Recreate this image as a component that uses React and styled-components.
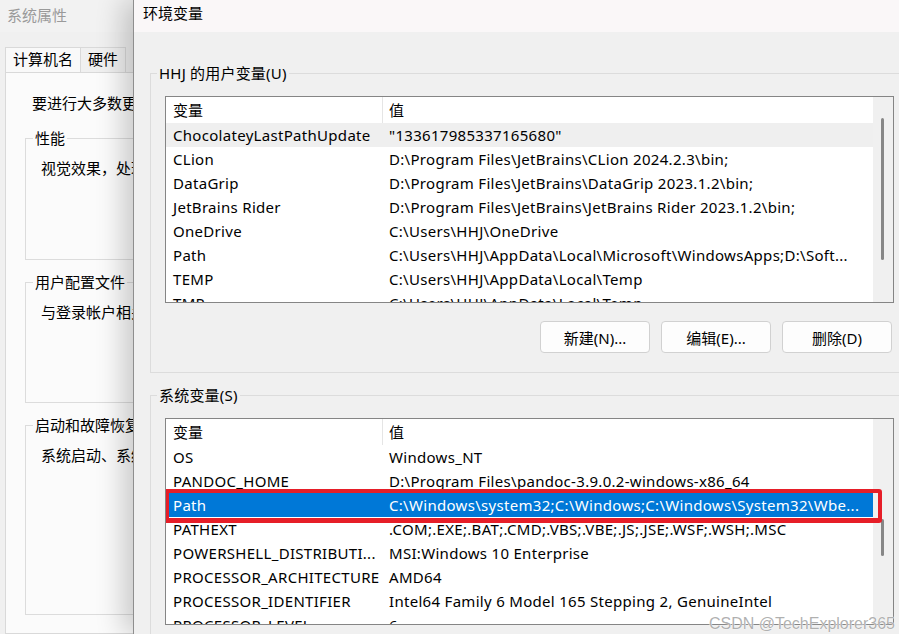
import React from 'react';
import styled, { createGlobalStyle } from 'styled-components';

const Global = createGlobalStyle`
  html, body {
    margin: 0;
    padding: 0;
    width: 899px;
    height: 634px;
    overflow: hidden;
    background: #f0f0f0;
  }
  body {
    font-family: "Noto Sans", "Noto Sans CJK SC", sans-serif;
    font-size: 15px;
    color: #000;
  }
  * { box-sizing: border-box; }
`;

const Desktop = styled.div`
  position: relative;
  display: flex;
  width: 899px;
  height: 634px;
  overflow: hidden;
`;

/* ---------- background window: 系统属性 ---------- */

const SysWindow = styled.div`
  flex: 0 0 133px;
  display: flex;
  flex-direction: column;
  overflow: hidden;
  background: #f0f0f0;
`;

const SysTitle = styled.div`
  height: 32px;
  flex: 0 0 32px;
  padding: 4px 0 0 7px;
  color: #9a9a9a;
  line-height: 22px;
  background: #f2f2f2;
  white-space: nowrap;
`;

const TabStrip = styled.div`
  display: flex;
  margin: 15px 0 0 5px;
  height: 25px;
`;

const Tab = styled.div`
  height: 25px;
  padding: 0 ${p => p.$pad || 7}px;
  border: 1px solid #d9d9d9;
  border-bottom: none;
  border-left-width: ${p => (p.$first ? 1 : 0)}px;
  line-height: 23px;
  background: ${p => (p.$active ? '#f9f9f9' : '#f0f0f0')};
  white-space: nowrap;
`;

const TabPage = styled.div`
  flex: 1;
  width: 260px;
  margin-left: 5px;
  border: 1px solid #d9d9d9;
  background: #fbfbfb;
  padding: 20px 0 0 26px;
  display: flex;
  flex-direction: column;
`;

const PageIntro = styled.div`
  line-height: 20px;
  white-space: nowrap;
`;

const SysGroup = styled.fieldset`
  margin: ${p => p.$top}px 0 0 -7px;
  height: ${p => p.$h}px;
  border: 1px solid #dcdcdc;
  border-right: none;
  padding: 10px 0 0 15px;
  min-width: 0;
  flex: 0 0 auto;
`;

const SysLegend = styled.legend`
  padding: 0 2px;
  margin-left: -8px;
  line-height: 20px;
  white-space: nowrap;
`;

const SysGroupText = styled.div`
  line-height: 20px;
  white-space: nowrap;
`;

/* ---------- foreground dialog: 环境变量 ---------- */

const Dialog = styled.div`
  position: relative;
  z-index: 1;
  flex: 0 0 792px;
  display: flex;
  flex-direction: column;
  border-left: 1px solid #8e8e8e;
  background: #f0f0f0;
  box-shadow: -10px 0 26px rgba(0, 0, 0, 0.2);
`;

const DialogTitle = styled.div`
  height: 32px;
  flex: 0 0 32px;
  padding: 2px 0 0 9px;
  line-height: 22px;
  background: #faf7f8;
`;

const DialogBody = styled.div`
  flex: 1;
  padding: 0 16px;
  display: flex;
  flex-direction: column;
`;

const Group = styled.fieldset`
  margin: ${p => p.$top}px 0 0 0;
  border: 1px solid #dcdcdc;
  padding: ${p => p.$pt}px 14px ${p => p.$pb}px 14px;
  min-width: 0;
  display: flex;
  flex-direction: column;
`;

const Legend = styled.legend`
  padding: 0 2px;
  margin-left: -8px;
  line-height: 20px;
  letter-spacing: 0.2px;
`;

const ListView = styled.div`
  height: ${p => p.$h}px;
  flex: 0 0 auto;
  border: 1px solid #858585;
  background: #fff;
  display: flex;
  overflow: hidden;
`;

const ListArea = styled.div`
  flex: 1;
  min-width: 0;
  display: flex;
  flex-direction: column;
`;

const HeaderRow = styled.div`
  display: grid;
  grid-template-columns: 217px 1fr;
  height: 26px;
  flex: 0 0 26px;
`;

const HeaderCell = styled.div`
  padding-left: ${p => p.$pl}px;
  line-height: 26px;
  border-right: ${p => (p.$divider ? '1px solid #e5e5e5' : 'none')};
`;

const Row = styled.div`
  position: relative;
  display: grid;
  grid-template-columns: 217px 1fr;
  height: 24px;
  flex: 0 0 24px;
  background: ${p => (p.$selected ? '#0078d7' : p.$hover ? '#efefef' : 'transparent')};
  color: ${p => (p.$selected ? '#fff' : '#000')};
`;

const Cell = styled.div`
  padding-left: ${p => p.$pl}px;
  line-height: 24px;
  letter-spacing: 0.3px;
  white-space: nowrap;
  overflow: hidden;
`;

/* hand-drawn red marker around the highlighted row */
const Marker = styled.div`
  position: absolute;
  left: -2px;
  right: -9px;
  top: -4px;
  bottom: -6px;
  border: 4px solid #e61e28;
  border-left-width: 5px;
  border-bottom-width: 5px;
  border-radius: 3px;
  pointer-events: none;
`;

const ScrollTrack = styled.div`
  flex: 0 0 20px;
  background: #f0f0f0;
  display: flex;
  flex-direction: column;
  align-items: flex-start;
`;

const ScrollThumb = styled.div`
  margin: ${p => p.$top}px 0 0 8px;
  width: 3px;
  height: ${p => p.$h}px;
  border-radius: 2px;
  background: #878787;
`;

const ButtonRow = styled.div`
  display: flex;
  justify-content: flex-end;
  gap: 11px;
  margin-top: 18px;
  padding-right: 2px;
`;

const Button = styled.button`
  width: 110px;
  height: 32px;
  border: 1px solid #d1d1d1;
  border-radius: 4px;
  background: #fdfdfd;
  font: inherit;
  color: #000;
  padding: 0;
`;

const Watermark = styled.div`
  position: absolute;
  right: 4px;
  bottom: 1px;
  z-index: 2;
  font-family: "Liberation Sans", Arial, sans-serif;
  font-size: 16px;
  color: rgba(150, 150, 150, 0.75);
  text-shadow: 0 0 1px #fff, 0 0 1px #fff;
  white-space: nowrap;
`;

const userVars = [
  ['ChocolateyLastPathUpdate', '"133617985337165680"'],
  ['CLion', 'D:\\Program Files\\JetBrains\\CLion 2024.2.3\\bin;'],
  ['DataGrip', 'D:\\Program Files\\JetBrains\\DataGrip 2023.1.2\\bin;'],
  ['JetBrains Rider', 'D:\\Program Files\\JetBrains\\JetBrains Rider 2023.1.2\\bin;'],
  ['OneDrive', 'C:\\Users\\HHJ\\OneDrive'],
  ['Path', 'C:\\Users\\HHJ\\AppData\\Local\\Microsoft\\WindowsApps;D:\\Soft...'],
  ['TEMP', 'C:\\Users\\HHJ\\AppData\\Local\\Temp'],
  ['TMP', 'C:\\Users\\HHJ\\AppData\\Local\\Temp'],
];

const systemVars = [
  ['OS', 'Windows_NT'],
  ['PANDOC_HOME', 'D:\\Program Files\\pandoc-3.9.0.2-windows-x86_64'],
  ['Path', 'C:\\Windows\\system32;C:\\Windows;C:\\Windows\\System32\\Wbe...'],
  ['PATHEXT', '.COM;.EXE;.BAT;.CMD;.VBS;.VBE;.JS;.JSE;.WSF;.WSH;.MSC'],
  ['POWERSHELL_DISTRIBUTI...', 'MSI:Windows 10 Enterprise'],
  ['PROCESSOR_ARCHITECTURE', 'AMD64'],
  ['PROCESSOR_IDENTIFIER', 'Intel64 Family 6 Model 165 Stepping 2, GenuineIntel'],
  ['PROCESSOR_LEVEL', '6'],
];

function VarList({ rows, height, thumbTop, thumbHeight, hoverIndex, selectedIndex, marked }) {
  return (
    <ListView $h={height}>
      <ListArea>
        <HeaderRow>
          <HeaderCell $pl={7} $divider>变量</HeaderCell>
          <HeaderCell $pl={6}>值</HeaderCell>
        </HeaderRow>
        {rows.map(([name, value], i) => (
          <Row key={name + i} $hover={i === hoverIndex} $selected={i === selectedIndex}>
            <Cell $pl={7}>{name}</Cell>
            <Cell $pl={6}>{value}</Cell>
            {marked && i === selectedIndex && <Marker />}
          </Row>
        ))}
      </ListArea>
      <ScrollTrack>
        <ScrollThumb $top={thumbTop} $h={thumbHeight} />
      </ScrollTrack>
    </ListView>
  );
}

export default function App() {
  return (
    <>
      <Global />
      <Desktop>
        <SysWindow>
          <SysTitle>系统属性</SysTitle>
          <TabStrip>
            <Tab $first $active $pad={7}>计算机名</Tab>
            <Tab $pad={7}>硬件</Tab>
          </TabStrip>
          <TabPage>
            <PageIntro>要进行大多数更改，你必须作为管理员登录。</PageIntro>
            <SysGroup $top={15} $h={132}>
              <SysLegend>性能</SysLegend>
              <SysGroupText>视觉效果，处理器计划，内存使用，以及虚拟内存</SysGroupText>
            </SysGroup>
            <SysGroup $top={12} $h={131}>
              <SysLegend>用户配置文件</SysLegend>
              <SysGroupText>与登录帐户相关的桌面设置</SysGroupText>
            </SysGroup>
            <SysGroup $top={12} $h={200}>
              <SysLegend>启动和故障恢复</SysLegend>
              <SysGroupText>系统启动、系统故障和调试信息</SysGroupText>
            </SysGroup>
          </TabPage>
        </SysWindow>

        <Dialog>
          <DialogTitle>环境变量</DialogTitle>
          <DialogBody>
            <Group $top={31} $pt={13} $pb={19}>
              <Legend>HHJ 的用户变量(U)</Legend>
              <VarList
                rows={userVars}
                height={207}
                thumbTop={21}
                thumbHeight={142}
                hoverIndex={0}
              />
              <ButtonRow>
                <Button>新建(N)...</Button>
                <Button>编辑(E)...</Button>
                <Button>删除(D)</Button>
              </ButtonRow>
            </Group>
            <Group $top={12} $pt={13} $pb={19}>
              <Legend>系统变量(S)</Legend>
              <VarList
                rows={systemVars}
                height={207}
                thumbTop={100}
                thumbHeight={37}
                selectedIndex={2}
                marked
              />
            </Group>
          </DialogBody>
        </Dialog>
        <Watermark>CSDN @TechExplorer365</Watermark>
      </Desktop>
    </>
  );
}
